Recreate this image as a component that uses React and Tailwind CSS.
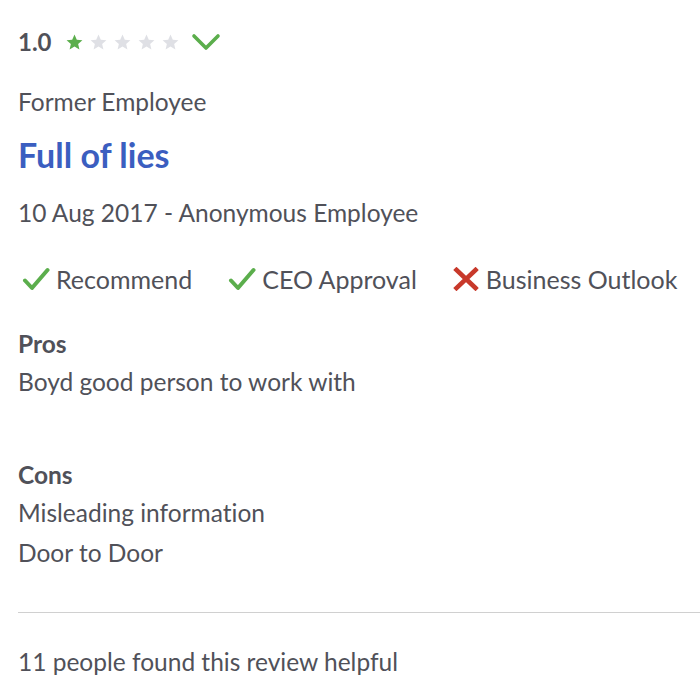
import React from "react";

const Star = ({ color }) => (
  <svg width="19" height="19" viewBox="0 0 24 24" fill={color}>
    <path d="M12 2l2.9 6.6 7.1.6-5.4 4.7 1.6 7L12 17.2l-6.2 3.7 1.6-7L2 9.2l7.1-.6z" />
  </svg>
);

const Check = () => (
  <svg width="28" height="24" viewBox="0 0 28 24" fill="none" stroke="#5bae4c" strokeWidth="4" strokeLinecap="round" strokeLinejoin="round">
    <path d="M3 13.5l7 7.5L25.5 3" />
  </svg>
);

const Cross = () => (
  <svg width="26" height="24" viewBox="0 0 26 24" fill="none" stroke="#c8392b" strokeWidth="4.6" strokeLinecap="square">
    <path d="M3.5 3l19 18M22.5 3l-19 18" />
  </svg>
);

const Chevron = () => (
  <svg width="30" height="20" viewBox="0 0 30 20" fill="none" stroke="#5bae4c" strokeWidth="3.6" strokeLinecap="round" strokeLinejoin="round">
    <path d="M3 4l12 12L27 4" />
  </svg>
);

export default function App() {
  return (
    <div className="bg-white w-[700px] h-[694px] overflow-hidden pl-[18px] text-[24.5px] leading-[40px] text-[#505159] font-['Lato',sans-serif] [font-variant-ligatures:none]">
      <div className="pt-[22px] h-[62px] flex items-center">
        <span className="font-bold text-[24px] mr-[13px]">1.0</span>
        <div className="flex items-center gap-[5px]">
          <Star color="#5bae4c" />
          <Star color="#dfe0e5" />
          <Star color="#dfe0e5" />
          <Star color="#dfe0e5" />
          <Star color="#dfe0e5" />
        </div>
        <div className="ml-[11px] flex items-center">
          <Chevron />
        </div>
      </div>
      <div className="mt-[20px]">Former Employee</div>
      <h1 className="mt-[9px] text-[34px] leading-[48px] font-bold text-[#3b5ec0]">Full of lies</h1>
      <div className="mt-[14px]">10 Aug 2017 - Anonymous Employee</div>
      <div className="mt-[26px] flex items-center pl-[4px] gap-[36px] text-[25px]">
        <div className="flex items-center gap-[6px]">
          <Check />
          <span>Recommend</span>
        </div>
        <div className="flex items-center gap-[6px]">
          <Check />
          <span>CEO Approval</span>
        </div>
        <div className="flex items-center gap-[7px]">
          <Cross />
          <span>Business Outlook</span>
        </div>
      </div>
      <div className="mt-[27px] font-bold leading-[36px]">Pros</div>
      <div>Boyd good person to work with</div>
      <div className="mt-[55px] font-bold leading-[36px]">Cons</div>
      <div>Misleading information</div>
      <div>Door to Door</div>
      <div className="mt-[39px] border-t border-[#d0d0d0]" />
      <div className="mt-[29px]">11 people found this review helpful</div>
    </div>
  );
}
